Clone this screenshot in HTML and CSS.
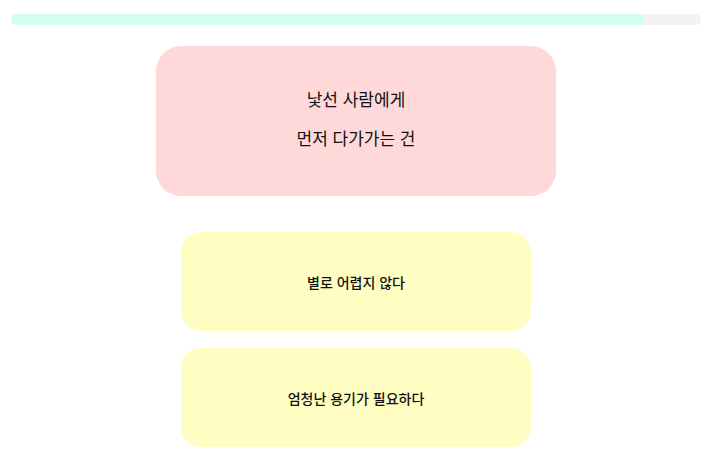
FILE: index.html
```html
<!DOCTYPE html>
<html lang="ko">
<head>
    <meta charset="UTF-8">
    <meta name="viewport" content="width=device-width, initial-scale=1.0">
    <link rel="stylesheet" href="styles.css">
    <title>질문</title>
</head>
<body>
    <!-- 진행 바 -->
    <div class="progress">
        <div class="progress-fill" style="width: 91.6%"></div>
    </div>

    <!-- 질문 카드 -->
    <div class="question">
        <p>낯선 사람에게</p>
        <p>먼저 다가가는 건</p>
    </div>

    <!-- 답변 버튼 -->
    <div class="answers">
        <button class="answer">별로 어렵지 않다</button>
        <button class="answer">엄청난 용기가 필요하다</button>
    </div>
</body>
</html>
```

FILE: styles.css
```css
body {
    font-family: 'Noto Sans CJK KR', 'Noto Sans', sans-serif;
    margin: 0;
    padding: 14px 13px 0 11px;
    background: #fff;
    color: #111;
    display: flex;
    flex-direction: column;
    align-items: center;
}

.progress {
    width: 100%;
    height: 11px;
    background: #f2f2f2;
    border-radius: 6px;
    overflow: hidden;
}
.progress-fill {
    height: 100%;
    background: #d2fff0;
}

.question {
    margin-top: 21px;
    width: 400px;
    height: 150px;
    box-sizing: border-box;
    background: #ffd9d9;
    border-radius: 25px;
    display: flex;
    flex-direction: column;
    justify-content: center;
    align-items: center;
    font-size: 17px;
    padding-bottom: 6px;
}
.question p {
    margin: 0;
    line-height: 23px;
}
.question p + p {
    margin-top: 16px;
}

.answers {
    margin-top: 36px;
    display: flex;
    flex-direction: column;
    gap: 17px;
}
.answer {
    width: 350px;
    height: 99px;
    border: none;
    border-radius: 20px;
    background: #fffdc2;
    font-family: inherit;
    font-size: 14px;
    font-weight: 500;
    color: #111;
    cursor: pointer;
}
```
